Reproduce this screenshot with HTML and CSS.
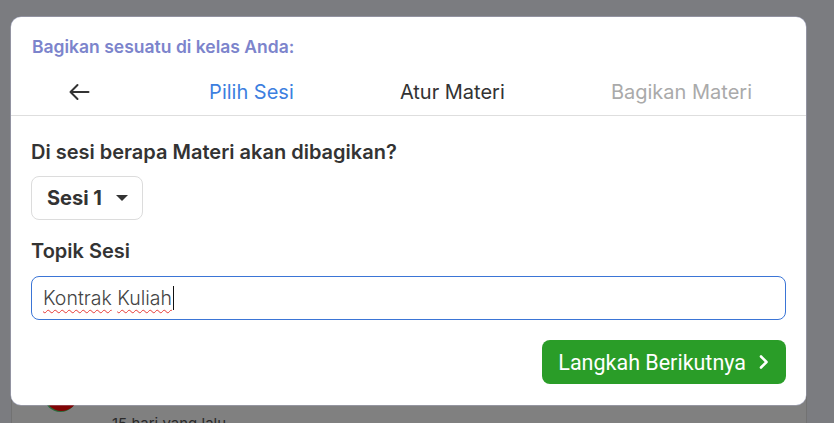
FILE: index.html
```html
<!DOCTYPE html>
<html lang="id">
<head>
<meta charset="utf-8">
<title>Bagikan Materi</title>
<link rel="stylesheet" href="styles.css">
</head>
<body>
<div class="page">
  <div class="behind-card">
    <div class="avatar"></div>
    <div class="meta">
      <div class="meta-name">Dosen</div>
      <div class="meta-time">15 hari yang lalu</div>
    </div>
  </div>
</div>

<div class="modal">
  <div class="modal-title">Bagikan sesuatu di kelas Anda:</div>
  <div class="tabs">
    <button class="back" aria-label="Kembali">
      <svg width="22" height="18" viewBox="0 0 22 18"><path d="M20.5 9H2.5M9.5 2L2.5 9l7 7" fill="none" stroke="#333" stroke-width="2" stroke-linecap="round" stroke-linejoin="round"/></svg>
    </button>
    <div class="tab tab-active">Pilih Sesi</div>
    <div class="tab">Atur Materi</div>
    <div class="tab tab-disabled">Bagikan Materi</div>
  </div>
  <div class="modal-body">
    <div class="label label-first">Di sesi berapa Materi akan dibagikan?</div>
    <button class="select">Sesi 1 <span class="caret"></span></button>
    <div class="label label-topic">Topik Sesi</div>
    <div class="input"><span class="value"><span class="typo">Kontrak</span> <span class="typo">Kuliah</span></span><span class="cursor"></span></div>
    <div class="actions">
      <button class="next">Langkah Berikutnya
        <svg width="14" height="16" viewBox="0 0 14 16"><path d="M4 2.5l5.5 5.5L4 13.5" fill="none" stroke="#fff" stroke-width="2.6" stroke-linecap="round" stroke-linejoin="round"/></svg>
      </button>
    </div>
  </div>
</div>
</body>
</html>
```

FILE: styles.css
```css
* { box-sizing: border-box; }

html, body {
  margin: 0;
  padding: 0;
}

body {
  width: 834px;
  height: 423px;
  overflow: hidden;
  background: #7b7c80;
  font-family: "Inter", "Noto Sans", sans-serif;
  position: relative;
}

.page {
  padding-top: 360px;
}

.behind-card {
  margin-left: 11px;
  width: 796px;
  height: 80px;
  background: #808080;
  border-left: 1px solid #727272;
  border-right: 1px solid #727272;
  display: flex;
  gap: 34px;
  padding: 18px 0 0 33px;
}

.avatar {
  width: 33px;
  height: 33px;
  border-radius: 50%;
  background: #800404;
  box-shadow: -1px 1px 0 #2a6a3a;
  flex: none;
}

.meta-name {
  font-size: 15px;
  color: #222;
  height: 22px;
}

.meta-time {
  font-size: 15px;
  color: #2a2a2a;
  margin-top: 14px;
}

.modal {
  position: absolute;
  left: 11px;
  top: 17px;
  width: 795px;
  height: 388px;
  background: #fff;
  border-radius: 10px;
  box-shadow: 0 0 0 0.5px rgba(200, 205, 240, 0.6);
}

.modal-title {
  padding: 20px 0 0 21px;
  font-size: 17.5px;
  line-height: 20px;
  font-weight: 600;
  color: #7c84cc;
}

.tabs {
  margin-top: 11px;
  height: 48px;
  border-bottom: 1px solid #dedede;
  display: flex;
  align-items: center;
  justify-content: space-between;
  padding: 0 54px 0 50px;
}

.back {
  border: none;
  background: none;
  padding: 0 7px;
  width: 36px;
  height: 36px;
  margin-right: 6px;
  display: flex;
  align-items: center;
  justify-content: center;
}

.tab {
  font-size: 20px;
  color: #333;
}

.tab-active { color: #3d7fe0; }
.tab-disabled { color: #aaa; }

.modal-body {
  padding: 0 20px;
}

.label {
  font-size: 20px;
  line-height: 24px;
  font-weight: 600;
  color: #333;
}

.label-first { margin-top: 24px; }
.label-topic { margin-top: 19px; }

.select {
  margin-top: 12px;
  height: 44px;
  width: 112px;
  border: 1px solid #dcdcdc;
  border-radius: 8px;
  background: #fff;
  font-family: inherit;
  font-size: 20px;
  font-weight: 700;
  color: #333;
  display: flex;
  align-items: center;
  padding: 0 0 0 15px;
  gap: 14px;
}

.caret {
  width: 0;
  height: 0;
  border-left: 6px solid transparent;
  border-right: 6px solid transparent;
  border-top: 6px solid #333;
}

.input {
  margin-top: 13px;
  height: 44px;
  border: 1px solid #3b75d6;
  border-radius: 8px;
  display: flex;
  align-items: center;
  padding: 0 11px;
  font-size: 19.5px;
  font-weight: 300;
  color: #444;
}

.value {
  white-space: pre;
}

.typo {
  text-decoration: underline wavy #e53935;
  text-decoration-thickness: 1px;
  text-underline-offset: 4px;
}

.cursor {
  width: 1px;
  height: 24px;
  background: #111;
  margin-left: 1px;
}

.actions {
  margin-top: 20px;
  display: flex;
  justify-content: flex-end;
}

.next {
  height: 44px;
  border: none;
  border-radius: 8px;
  background: #2a9d28;
  color: #fff;
  font-family: "Roboto", "Inter", sans-serif;
  font-size: 21.5px;
  display: flex;
  align-items: center;
  gap: 11px;
  padding: 0 15px 0 16px;
}
```
